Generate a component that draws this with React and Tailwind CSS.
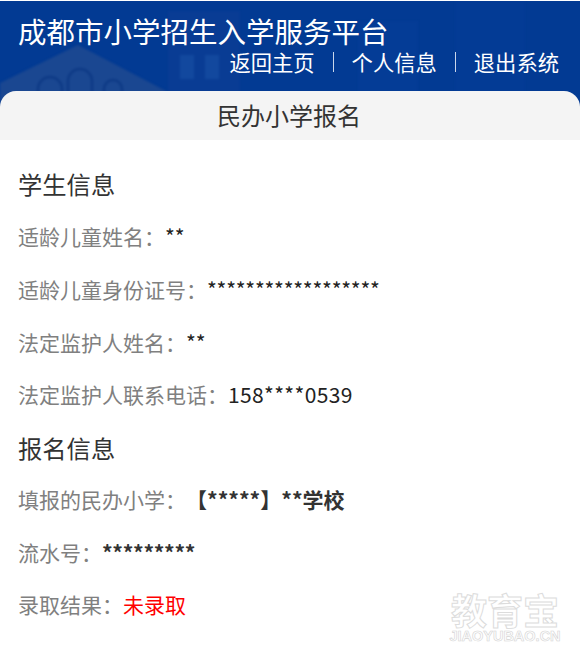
const font = "font-['Noto_Sans_CJK_SC',sans-serif]";

function HeaderArt() {
  return (
    <svg className="absolute inset-0 h-full w-full" viewBox="0 0 580 106" preserveAspectRatio="none" aria-hidden="true">
      <g className="blur-[1px]">
        <path d="M0 82 L78 44 L166 90 L166 106 L0 106 Z" fill="#1a4791" />
        <path d="M38 92 V88 a12 12 0 0 1 24 0 V92 M68 92 V80 a12 12 0 0 1 24 0 V92 M104 92 V88 a9 9 0 0 1 18 0 V92" fill="none" stroke="#0e3a86" strokeWidth="2.5" />
        <rect x="168" y="10" width="72" height="96" fill="#093c94" />
        <rect x="180" y="54" width="14" height="24" fill="#12489e" />
        <rect x="205" y="54" width="14" height="24" fill="#12489e" />
        <rect x="358" y="20" width="60" height="86" fill="#043c96" />
        <rect x="455" y="0" width="70" height="106" fill="#033b95" />
      </g>
    </svg>
  );
}

function Row({ label, children }) {
  return (
    <div className="flex h-[30px] items-center text-[21px] whitespace-nowrap">
      <span className="text-[#808080]">{label}</span>
      {children}
    </div>
  );
}

export default function App() {
  return (
    <div className={`relative h-[665px] w-[580px] overflow-hidden bg-white pt-px ${font}`}>
      <header className="relative h-[106px] overflow-hidden bg-[#023a93]">
        <HeaderArt />
        <div className="relative flex flex-col px-[18px] pt-[11px]">
          <h1 className="h-[38px] text-[28.5px] leading-[38px] font-normal whitespace-nowrap text-white">成都市小学招生入学服务平台</h1>
          <nav className="flex h-[24px] items-center justify-end pr-[3px] text-[21.3px] leading-[24px] text-white">
            <span>返回主页</span>
            <span className="mx-[18px] h-[20px] w-px bg-[#c9d6ea]" />
            <span>个人信息</span>
            <span className="mx-[18px] h-[20px] w-px bg-[#c9d6ea]" />
            <span>退出系统</span>
          </nav>
        </div>
      </header>
      <div className="relative -mt-[16px] flex h-[49px] items-center justify-center rounded-t-[16px] bg-[#f4f4f4] pr-[2px] pb-[2px] text-[24px] text-[#333333]">
        民办小学报名
      </div>
      <main className="flex flex-col px-[18px] pt-[26px] text-[#222222]">
        <h2 className="h-[36px] text-[24.3px] leading-[36px] font-normal text-[#333333]">学生信息</h2>
        <div className="mt-[20px] flex flex-col gap-[22.7px]">
          <Row label="适龄儿童姓名："><span>**</span></Row>
          <Row label="适龄儿童身份证号："><span className="tracking-[-0.22px]">******************</span></Row>
          <Row label="法定监护人姓名："><span>**</span></Row>
          <Row label="法定监护人联系电话："><span className="tracking-[0.35px]">158****0539</span></Row>
        </div>
        <h2 className="mt-[20px] h-[36px] text-[24.3px] leading-[36px] font-normal text-[#333333]">报名信息</h2>
        <div className="mt-[19px] flex flex-col gap-[22.5px]">
          <Row label="填报的民办小学："><span className="font-bold text-[#333333]">【*****】**学校</span></Row>
          <Row label="流水号："><span className="font-bold tracking-[-0.3px] text-[#333333]">*********</span></Row>
          <Row label="录取结果："><span className="text-[#ff0000]">未录取</span></Row>
        </div>
      </main>
      <div className="absolute top-[590px] left-[450px] flex w-[110px] flex-col items-center">
        <span className="h-[38px] text-[36px] leading-[38px] font-bold whitespace-nowrap text-transparent [-webkit-text-stroke:1px_#dcdcdc]">教育宝</span>
        <span className="mt-[1px] h-[14px] font-['Liberation_Sans',sans-serif] text-[14.5px] leading-[14px] font-bold whitespace-nowrap text-transparent [-webkit-text-stroke:0.6px_#d4d4d4]">JIAOYUBAO.CN</span>
      </div>
    </div>
  );
}
